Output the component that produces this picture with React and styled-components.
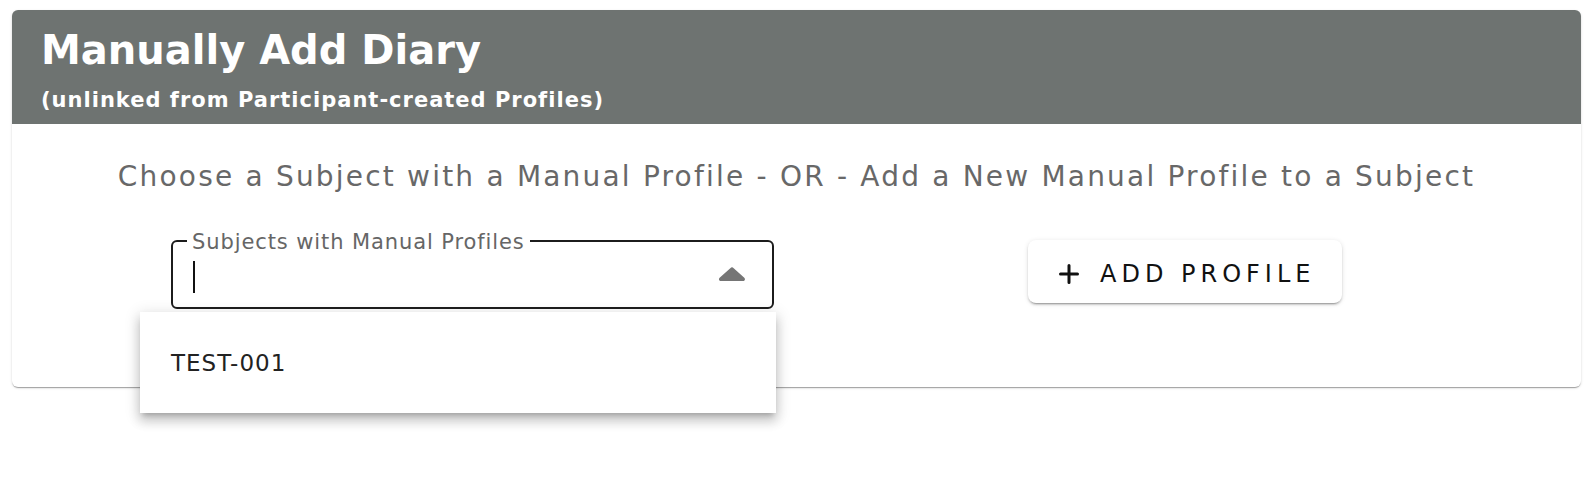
import React from 'react';
import styled, { createGlobalStyle } from 'styled-components';

const GlobalStyle = createGlobalStyle`
  html, body {
    margin: 0;
    padding: 0;
    background: #ffffff;
    font-family: "DejaVu Sans", "Liberation Sans", sans-serif;
  }
`;

const Page = styled.div`
  min-height: 100vh;
  box-sizing: border-box;
  padding: 10px 15px 0 12px;
`;

const Card = styled.div`
  display: flex;
  flex-direction: column;
  height: 377px;
  border-radius: 6px;
  background: #ffffff;
  box-shadow: 0 2px 1px -1px rgba(0, 0, 0, 0.2), 0 1px 1px 0 rgba(0, 0, 0, 0.14),
    0 1px 3px 0 rgba(0, 0, 0, 0.12);
`;

const Header = styled.div`
  display: flex;
  flex-direction: column;
  height: 114px;
  padding: 15px 29px 0;
  box-sizing: border-box;
  border-radius: 6px 6px 0 0;
  background: #6e7371;
  color: #ffffff;
`;

const Title = styled.div`
  font-size: 40px;
  font-weight: 700;
  line-height: 50px;
`;

const Subtitle = styled.div`
  margin-top: 12px;
  font-size: 21px;
  font-weight: 700;
  line-height: 26px;
  letter-spacing: 1px;
`;

const Prompt = styled.div`
  margin-top: 35px;
  text-align: center;
  color: #686868;
  font-size: 28px;
  font-weight: 400;
  line-height: 36px;
  letter-spacing: 2.2px;
`;

const Row = styled.div`
  display: flex;
  align-items: flex-start;
  margin-top: 45px;
  padding-left: 159px;
  gap: 254px;
`;

const Field = styled.div`
  position: relative;
  width: 603px;
  height: 69px;
  box-sizing: border-box;
  border: 2px solid #1c1c1c;
  border-radius: 6px;
`;

const FieldLabel = styled.span`
  position: absolute;
  top: -12px;
  left: 14px;
  padding: 0 5px;
  background: #ffffff;
  color: #666666;
  font-size: 21px;
  line-height: 24px;
  letter-spacing: 0.9px;
`;

const Caret = styled.span`
  position: absolute;
  left: 20px;
  top: 19px;
  width: 2px;
  height: 32px;
  background: #111111;
`;

const Arrow = styled.svg`
  position: absolute;
  right: 26px;
  top: 25px;
`;

const Popup = styled.div`
  position: absolute;
  top: calc(100% + 5px);
  left: -33px;
  width: 636px;
  height: 101px;
  display: flex;
  align-items: center;
  padding-left: 31px;
  box-sizing: border-box;
  background: #ffffff;
  box-shadow: 0 5px 5px -3px rgba(0, 0, 0, 0.2), 0 8px 10px 1px rgba(0, 0, 0, 0.14),
    0 3px 14px 2px rgba(0, 0, 0, 0.12);
  z-index: 2;
`;

const Option = styled.div`
  color: #222222;
  font-size: 23px;
  letter-spacing: 1px;
`;

const AddButton = styled.button`
  display: flex;
  align-items: center;
  gap: 21px;
  width: 314px;
  height: 63px;
  padding: 4px 0 0 31px;
  box-sizing: border-box;
  border: none;
  border-radius: 8px;
  background: #ffffff;
  color: #111111;
  font-family: "DejaVu Sans", "Liberation Sans", sans-serif;
  font-size: 24px;
  letter-spacing: 5px;
  box-shadow: 0 3px 1px -2px rgba(0, 0, 0, 0.2), 0 2px 2px 0 rgba(0, 0, 0, 0.14),
    0 1px 5px 0 rgba(0, 0, 0, 0.12);
  cursor: pointer;
`;

const PlusIcon = () => (
  <svg width="20" height="20" viewBox="0 0 20 20">
    <path d="M10 1.5V18.5M1.5 10H18.5" stroke="#111111" strokeWidth="3" strokeLinecap="round" />
  </svg>
);

const App = () => {
  return (
    <Page>
      <GlobalStyle />
      <Card>
        <Header>
          <Title>Manually Add Diary</Title>
          <Subtitle>(unlinked from Participant-created Profiles)</Subtitle>
        </Header>
        <Prompt>Choose a Subject with a Manual Profile - OR - Add a New Manual Profile to a Subject</Prompt>
        <Row>
          <Field>
            <FieldLabel>Subjects with Manual Profiles</FieldLabel>
            <Caret />
            <Arrow width="28" height="14" viewBox="0 0 28 14">
              <path d="M12.3 1.2a2.4 2.4 0 0 1 3.4 0l10.6 9.6c1.3 1.2.5 3.2-1.3 3.2H2.9c-1.8 0-2.6-2-1.3-3.2z" fill="#757575" />
            </Arrow>
            <Popup>
              <Option>TEST-001</Option>
            </Popup>
          </Field>
          <AddButton>
            <PlusIcon />
            ADD PROFILE
          </AddButton>
        </Row>
      </Card>
    </Page>
  );
};

export default App;
